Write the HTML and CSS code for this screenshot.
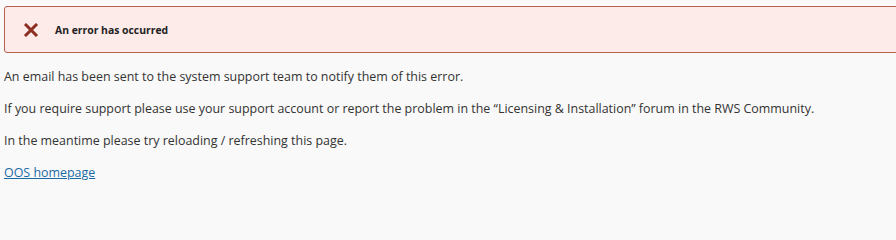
FILE: index.html
```html
<!DOCTYPE html>
<html>
<head>
<meta charset="utf-8">
<link rel="stylesheet" href="styles.css">
</head>
<body>
<div class="page">
  <div class="alert">
    <svg class="alert-icon" width="16" height="14" viewBox="0 0 16 14">
      <path d="M2 1 L14 13 M14 1 L2 13" stroke="#8c2f22" stroke-width="3" stroke-linecap="butt" fill="none"/>
    </svg>
    <span class="alert-title">An error has occurred</span>
  </div>
  <p class="msg">An email has been sent to the system support team to notify them of this error.</p>
  <p class="msg">If you require support please use your support account or report the problem in the “Licensing &amp; Installation” forum in the RWS Community.</p>
  <p class="msg">In the meantime please try reloading / refreshing this page.</p>
  <p class="msg"><a class="home-link" href="#">OOS homepage</a></p>
</div>
</body>
</html>
```

FILE: styles.css
```css
html, body {
  margin: 0;
  padding: 0;
  background: #f9f9f9;
  overflow: hidden;
}
.page {
  padding: 6px 0 0 4px;
  font-family: "Open Sans", "Noto Sans", sans-serif;
  color: #333;
}
.alert {
  display: flex;
  align-items: center;
  height: 45px;
  margin-right: -20px;
  border: 1px solid #b8604f;
  border-radius: 3px;
  background: #fdebe9;
  padding-left: 18px;
}
.alert-icon {
  flex: none;
  margin-right: 16px;
}
.alert-title {
  font-size: 10.4px;
  font-weight: 700;
  color: #222;
}
.msg {
  margin: 0;
  padding-top: 12px;
  font-size: 12.45px;
  line-height: 20px;
}
.msg:first-of-type {
  padding-top: 14px;
}
.home-link {
  color: #1b6aa5;
  text-decoration: underline;
}
```
